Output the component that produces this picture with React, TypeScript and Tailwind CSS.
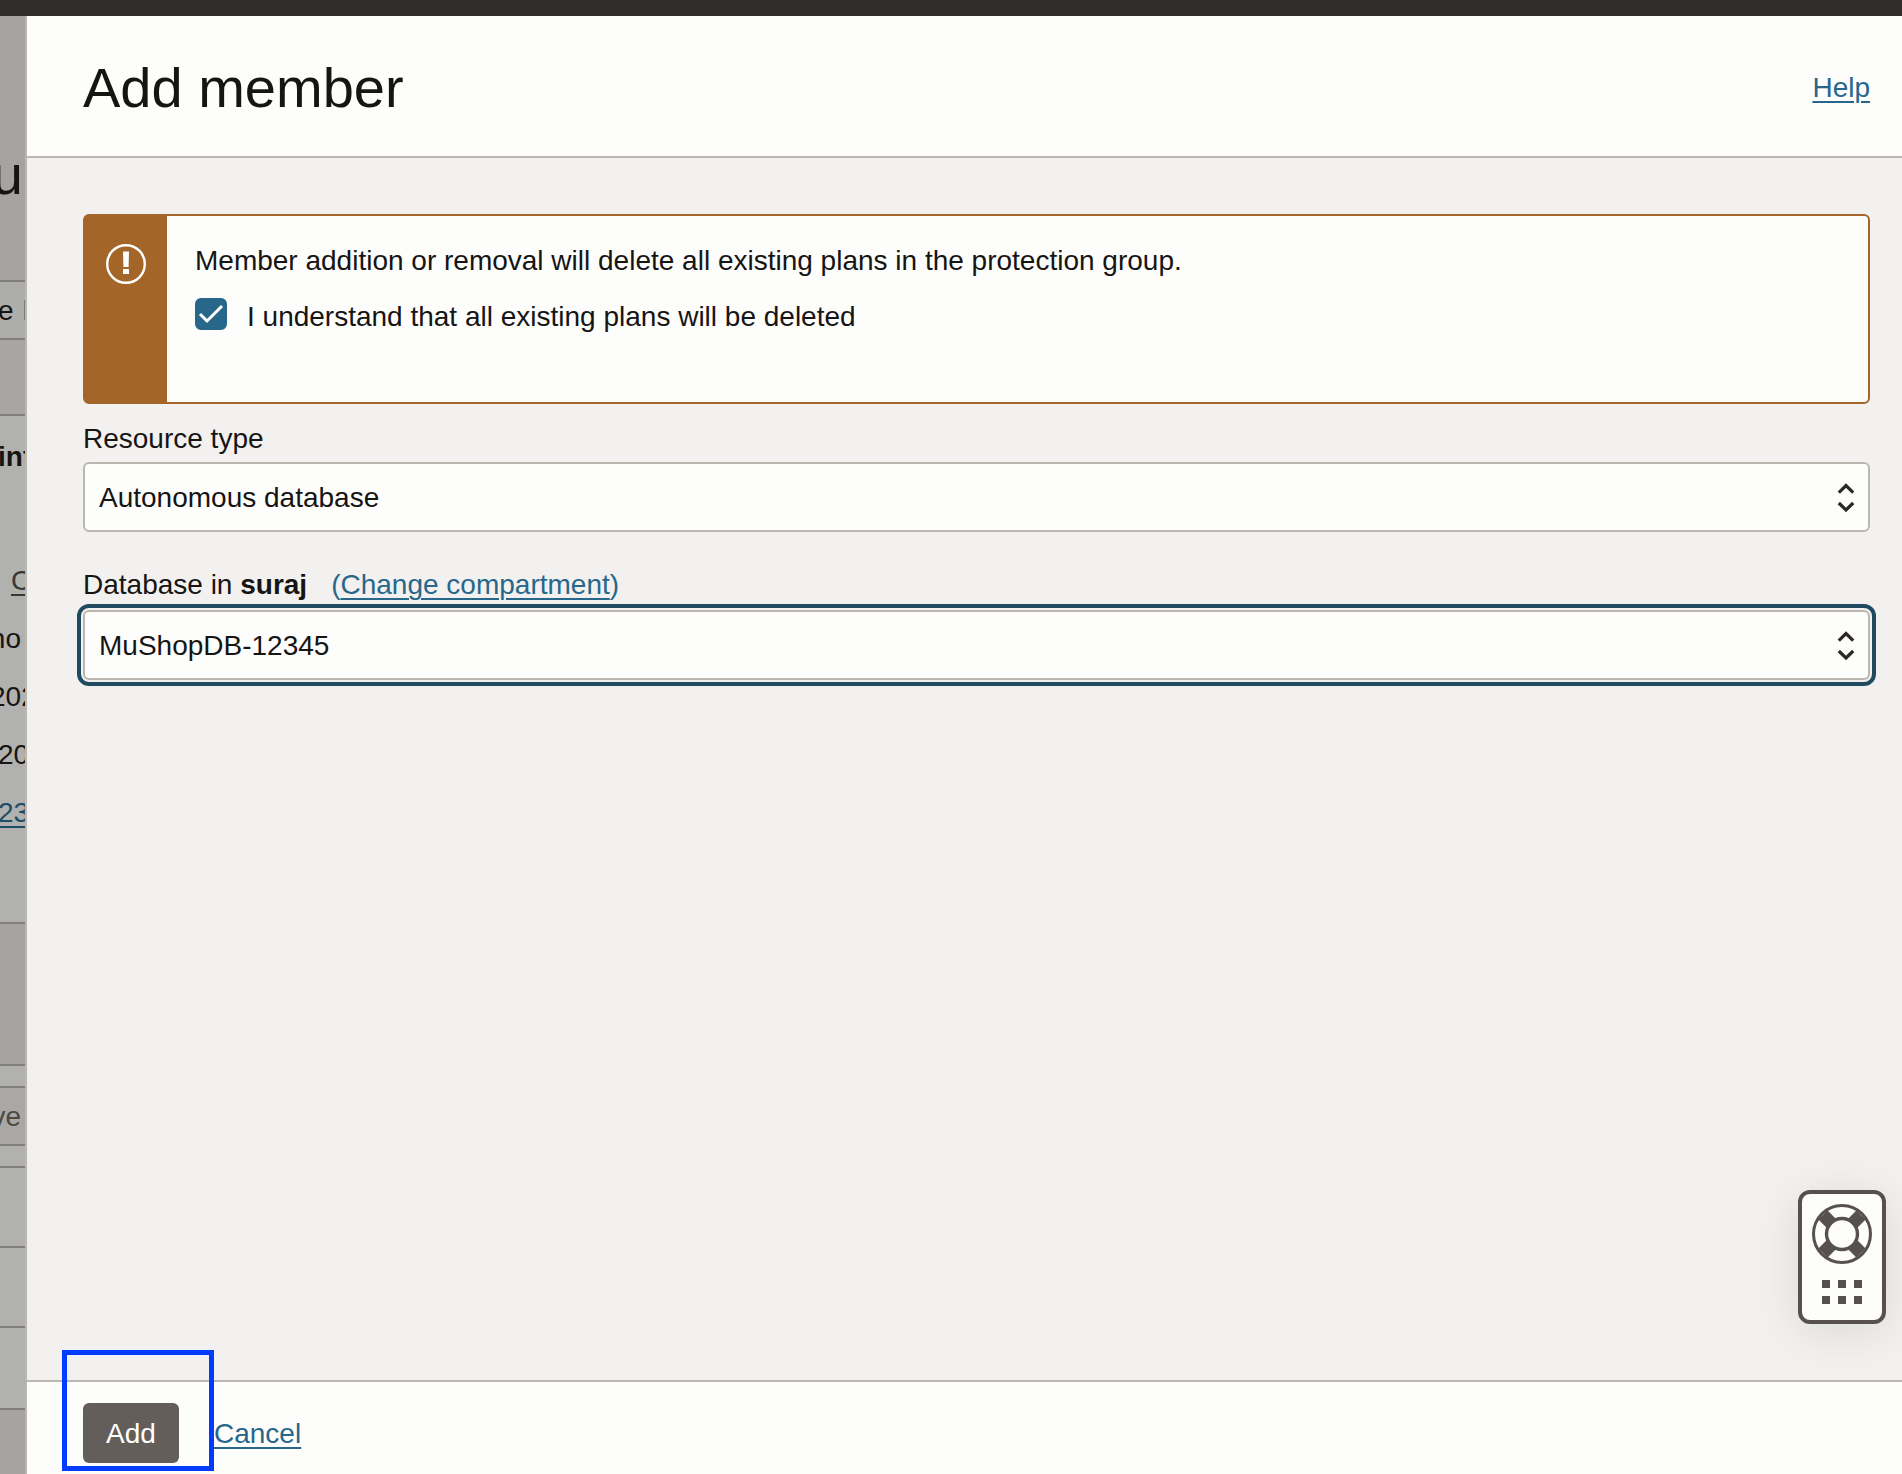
import React, { useState } from "react";

const linkColor = "text-[#27678a]";
const underlined = "underline decoration-2 underline-offset-4";

function SelectArrows() {
  return (
    <svg
      className="pointer-events-none absolute inset-y-0 right-3.5 my-auto"
      width="20"
      height="32"
      viewBox="0 0 20 32"
      fill="none"
      stroke="#2b2826"
      strokeWidth="3.2"
      aria-hidden="true"
    >
      <path d="M2.8 11.6 10 4.6l7.2 7" />
      <path d="M2.8 22l7.2 7 7.2-7" />
    </svg>
  );
}

function SelectField({ id, options, focused = false }: { id: string; options: string[]; focused?: boolean }) {
  return (
    <div className="relative">
      <select
        id={id}
        className={
          "block h-[70px] w-full appearance-none rounded-md border-2 border-[#bcb6b1] bg-[#fdfdfc] pt-0.5 pr-12 pl-3.5 text-[28px] text-[#161513] " +
          (focused ? "outline-4 outline-offset-2 outline-[#1f4a60]" : "outline-none")
        }
      >
        {options.map((o) => (
          <option key={o}>{o}</option>
        ))}
      </select>
      <SelectArrows />
    </div>
  );
}

function BackgroundPage() {
  return (
    <aside className="w-[25px] shrink-0 overflow-hidden bg-[#b1b1af] whitespace-nowrap" aria-hidden="true">
      <div className="flex h-[264px] justify-end bg-[#a5a4a3] pt-[123px] pr-0.5 text-[56px] leading-[72px]">u</div>
      <div className="flex h-[60px] border-y-2 border-[#827e7b] bg-[#adadab] leading-[58px]">
        <span className="-ml-0.5">e</span>
        <span className="my-[18px] ml-2.5 w-0.5 shrink-0 bg-[#7c7b79]" />
      </div>
      <div className="h-[76px] border-b-2 border-[#827e7b] bg-[#a7a6a5]" />
      <div className="h-[508px] border-b-2 border-[#827e7b] pt-3 leading-[58px]">
        <div className="-ml-0.5 font-bold">int</div>
        <div className={"mt-[66px] pl-[11px] text-[#3a3836] " + underlined}>C</div>
        <div className="flex justify-end pr-1">no</div>
        <div className="-ml-2.5">202</div>
        <div className="-ml-0.5">20</div>
        <div className={"-ml-0.5 text-[#1d4d68] " + underlined}>23</div>
      </div>
      <div className="h-[142px] border-b-2 border-[#827e7b] bg-[#a5a4a3]" />
      <div className="h-[22px] border-b-2 border-[#827e7b]" />
      <div className="flex h-[58px] justify-end border-b-2 border-[#827e7b] bg-[#a9a8a6] pr-1 leading-[58px] text-[#4b4845]">ve</div>
      <div className="h-[22px] border-b-2 border-[#827e7b]" />
      <div className="h-20 border-b-2 border-[#827e7b]" />
      <div className="h-20 border-b-2 border-[#827e7b]" />
      <div className="h-[82px] border-b-2 border-[#827e7b]" />
      <div className="h-full bg-[#a5a4a3]" />
    </aside>
  );
}

function SupportWidget() {
  return (
    <button
      type="button"
      aria-label="Support"
      className="absolute right-4 bottom-14 flex h-[134px] w-[88px] flex-col items-center rounded-xl border-4 border-[#56514e] bg-[#fdfdfc] pt-2.5 shadow-[0_8px_48px_rgba(0,0,0,0.1)]"
    >
      <svg width="60" height="60" viewBox="0 0 60 60" fill="none" stroke="#56514e" aria-hidden="true">
        <path strokeWidth="13" d="M11 11l8.5 8.5M49 11l-8.5 8.5M11 49l8.5-8.5M49 49l-8.5-8.5" />
        <circle cx="30" cy="30" r="28.5" strokeWidth="3" />
        <circle cx="30" cy="30" r="15.5" strokeWidth="3.4" fill="#fdfdfc" />
      </svg>
      <span className="mt-4 grid grid-cols-3 gap-2">
        {[0, 1, 2, 3, 4, 5].map((n) => (
          <span key={n} className="size-2 bg-[#56514e]" />
        ))}
      </span>
    </button>
  );
}

export default function App() {
  const [understood, setUnderstood] = useState(true);
  return (
    <div className="flex h-screen flex-col overflow-hidden bg-[#f3f1f0] font-['Liberation_Sans',Arial,sans-serif] text-[28px] leading-[38px] text-[#161513]">
      <div className="h-4 shrink-0 bg-[#312d2a]" />
      <div className="flex min-h-0 flex-1">
        <BackgroundPage />
        <section className="flex min-w-0 flex-1 flex-col border-l-2 border-[#bcb6b1]" aria-labelledby="panel-title">
          <header className="flex h-[142px] shrink-0 items-center justify-between border-b-2 border-[#bcb6b1] bg-[#fdfdfc] pt-[3px] pr-8 pl-14">
            <h1 id="panel-title" className="text-[56px] leading-[64px]">Add member</h1>
            <a href="#help" className={linkColor + " " + underlined}>Help</a>
          </header>

          <main className="relative flex-1 pt-14 pr-8 pl-14">
            <div className="flex rounded-md border-2 border-[#a36628] bg-[#fdfdfc]" role="alert">
              <div className="flex w-[82px] shrink-0 justify-center bg-[#a36628] pt-7">
                <svg width="40" height="40" viewBox="0 0 40 40" fill="none" aria-hidden="true">
                  <circle cx="20" cy="20" r="18.8" stroke="#fff" strokeWidth="2.4" />
                  <path d="M17 7.5h6L22.6 23h-5.2zM17 25h6v5h-6z" fill="#fff" />
                </svg>
              </div>
              <div className="px-7 pt-[26px] pb-[66px]">
                <p>Member addition or removal will delete all existing plans in the protection group.</p>
                <div className="mt-[18px] flex items-start gap-5">
                  <span className="relative size-8 shrink-0">
                    <input
                      id="understand"
                      type="checkbox"
                      checked={understood}
                      onChange={(e) => setUnderstood(e.target.checked)}
                      className="block size-8 appearance-none rounded-md border-2 border-[#27678a] bg-[#fdfdfc] checked:bg-[#27678a]"
                    />
                    {understood && (
                      <svg className="pointer-events-none absolute inset-0" width="32" height="32" viewBox="0 0 32 32" fill="none" stroke="#fff" strokeWidth="3" aria-hidden="true">
                        <path d="M5 16l7 7L27 8" />
                      </svg>
                    )}
                  </span>
                  <label htmlFor="understand">I understand that all existing plans will be deleted</label>
                </div>
              </div>
            </div>

            <div className="mt-4 flex flex-col gap-1">
              <label htmlFor="resource-type">Resource type</label>
              <SelectField id="resource-type" options={["Autonomous database"]} />
            </div>

            <div className="mt-[34px] flex flex-col gap-1.5">
              <div className="flex gap-6">
                <label htmlFor="database">
                  Database in <strong>suraj</strong>
                </label>
                <a href="#compartment" className={linkColor}>
                  (<span className={underlined}>Change compartment</span>)
                </a>
              </div>
              <SelectField id="database" options={["MuShopDB-12345"]} focused />
            </div>

            <SupportWidget />
          </main>

          <footer className="flex shrink-0 items-center border-t-2 border-[#bcb6b1] bg-[#fdfdfc] pt-[21px] pb-[11px] pl-14">
            <div className="relative">
              <button type="button" className="h-[60px] w-24 rounded-md bg-[#645e5a] pt-0.5 text-white">Add</button>
              <span className="pointer-events-none absolute -top-[53px] -right-[35px] -bottom-2 -left-[21px] border-5 border-[#003cff]" />
            </div>
            <a href="#cancel" className={"ml-[35px] pt-0.5 " + linkColor + " " + underlined}>Cancel</a>
          </footer>
        </section>
      </div>
    </div>
  );
}
